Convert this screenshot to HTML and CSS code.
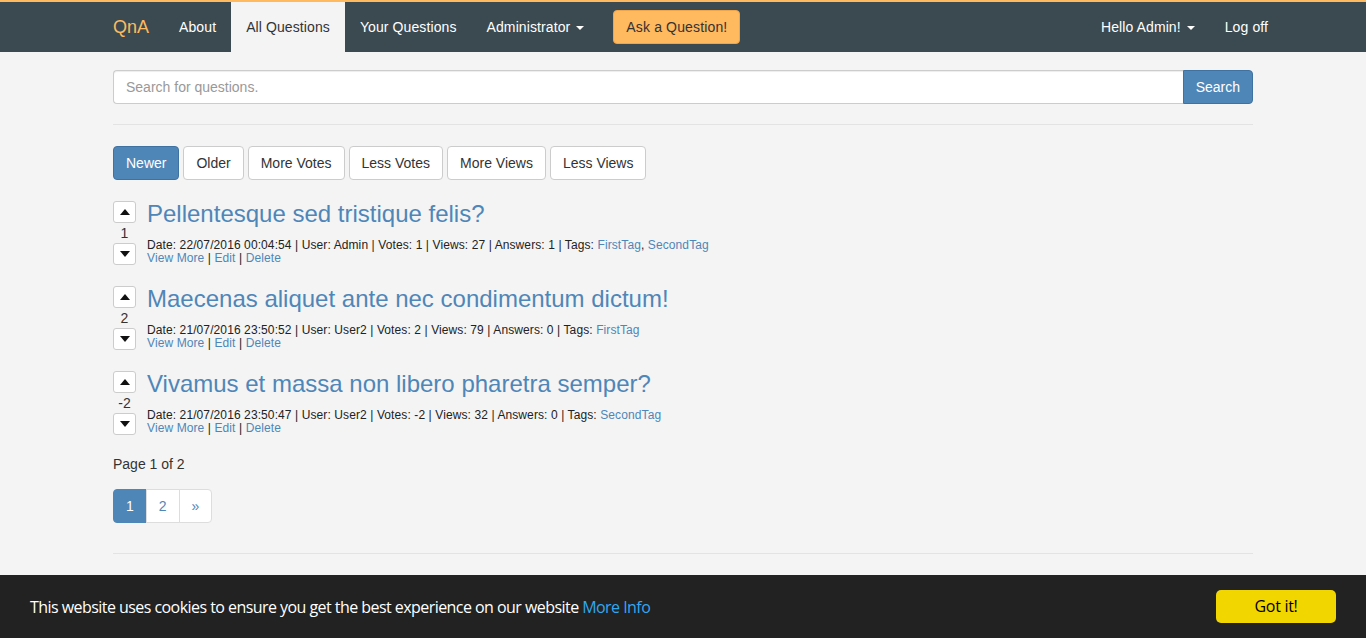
FILE: index.html
```html
<!DOCTYPE html>
<html lang="en">
<head>
<meta charset="utf-8">
<title>All Questions - QnA</title>
<link rel="stylesheet" href="styles.css">
</head>
<body>
<nav class="navbar">
  <div class="container nav-inner">
    <div class="nav-left">
      <a class="brand" href="#">QnA</a>
      <a class="nav-link" href="#">About</a>
      <a class="nav-link active" href="#">All Questions</a>
      <a class="nav-link" href="#">Your Questions</a>
      <a class="nav-link" href="#">Administrator <span class="caret"></span></a>
      <a class="ask-btn" href="#">Ask a Question!</a>
    </div>
    <div class="nav-right">
      <a class="nav-link" href="#">Hello Admin! <span class="caret"></span></a>
      <a class="nav-link" href="#">Log off</a>
    </div>
  </div>
</nav>

<main class="container">
  <form class="search">
    <input class="search-input" type="text" placeholder="Search for questions.">
    <button class="search-btn" type="button">Search</button>
  </form>
  <hr class="rule rule-top">

  <div class="sorts">
    <a class="btn btn-primary" href="#">Newer</a>
    <a class="btn" href="#">Older</a>
    <a class="btn" href="#">More Votes</a>
    <a class="btn" href="#">Less Votes</a>
    <a class="btn" href="#">More Views</a>
    <a class="btn" href="#">Less Views</a>
  </div>

  <div class="questions">
    <div class="question">
      <div class="votes">
        <button class="vote" type="button"><span class="tri up"></span></button>
        <div class="count">1</div>
        <button class="vote" type="button"><span class="tri down"></span></button>
      </div>
      <div class="q-body">
        <a class="q-title" href="#">Pellentesque sed tristique felis?</a>
        <div class="meta">Date: 22/07/2016 00:04:54 | User: Admin | Votes: 1 | Views: 27 | Answers: 1 | Tags: <a href="#">FirstTag</a>, <a href="#">SecondTag</a></div>
        <div class="meta"><a href="#">View More</a> | <a href="#">Edit</a> | <a href="#">Delete</a></div>
      </div>
    </div>

    <div class="question">
      <div class="votes">
        <button class="vote" type="button"><span class="tri up"></span></button>
        <div class="count">2</div>
        <button class="vote" type="button"><span class="tri down"></span></button>
      </div>
      <div class="q-body">
        <a class="q-title" href="#">Maecenas aliquet ante nec condimentum dictum!</a>
        <div class="meta">Date: 21/07/2016 23:50:52 | User: User2 | Votes: 2 | Views: 79 | Answers: 0 | Tags: <a href="#">FirstTag</a></div>
        <div class="meta"><a href="#">View More</a> | <a href="#">Edit</a> | <a href="#">Delete</a></div>
      </div>
    </div>

    <div class="question">
      <div class="votes">
        <button class="vote" type="button"><span class="tri up"></span></button>
        <div class="count">-2</div>
        <button class="vote" type="button"><span class="tri down"></span></button>
      </div>
      <div class="q-body">
        <a class="q-title" href="#">Vivamus et massa non libero pharetra semper?</a>
        <div class="meta">Date: 21/07/2016 23:50:47 | User: User2 | Votes: -2 | Views: 32 | Answers: 0 | Tags: <a href="#">SecondTag</a></div>
        <div class="meta"><a href="#">View More</a> | <a href="#">Edit</a> | <a href="#">Delete</a></div>
      </div>
    </div>
  </div>

  <p class="page-info">Page 1 of 2</p>
  <ul class="pagination">
    <li class="active"><a href="#">1</a></li>
    <li><a href="#">2</a></li>
    <li><a href="#">&raquo;</a></li>
  </ul>
  <hr class="rule rule-bottom">
</main>

<div class="cookie">
  <span class="cookie-text">This website uses cookies to ensure you get the best experience on our website <a href="#">More Info</a></span>
  <a class="cookie-btn" href="#">Got it!</a>
</div>
</body>
</html>
```

FILE: styles.css
```css
* { box-sizing: border-box; }

html, body {
  margin: 0;
  padding: 0;
}

body {
  background: #f4f4f4;
  color: #333;
  font-family: "Liberation Sans", Arial, sans-serif;
  font-size: 14px;
  line-height: 20px;
}

a { text-decoration: none; color: #4f86b8; }

.container {
  width: 1170px;
  margin: 0 auto;
  padding: 0 15px;
}

/* Navbar */
.navbar {
  background: #3b4a50;
  border-top: 2px solid #ffb95f;
  height: 52px;
}

.nav-inner {
  display: flex;
  justify-content: space-between;
  height: 50px;
}

.nav-left, .nav-right {
  display: flex;
  align-items: stretch;
}

.nav-left { margin-left: -15px; }
.nav-right { margin-right: -30px; }

.brand {
  color: #ffb95f;
  font-size: 18px;
  line-height: 20px;
  padding: 15px;
}

.nav-link {
  color: #fff;
  padding: 15px;
  line-height: 20px;
  letter-spacing: 0.1px;
}

.nav-link.active {
  background: #f4f4f4;
  color: #333;
}

.caret {
  display: inline-block;
  width: 0;
  height: 0;
  margin-left: 2px;
  vertical-align: middle;
  border-top: 4px solid;
  border-right: 4px solid transparent;
  border-left: 4px solid transparent;
}

.ask-btn {
  align-self: flex-start;
  margin: 8px 0 0 14px;
  background: #ffb95f;
  border: 1px solid #f0a54a;
  border-radius: 4px;
  color: #333;
  padding: 6px 12px;
  line-height: 20px;
  letter-spacing: 0.15px;
}

/* Search */
.search {
  display: flex;
  margin-top: 18px;
}

.search-input {
  flex: 1;
  height: 34px;
  padding: 6px 12px;
  font: 14px "Liberation Sans", Arial, sans-serif;
  color: #555;
  background: #fff;
  border: 1px solid #ccc;
  border-right: 0;
  border-radius: 4px 0 0 4px;
  box-shadow: inset 0 1px 1px rgba(0,0,0,.075);
}

.search-input::placeholder { color: #999; }

.search-btn {
  height: 34px;
  padding: 6px 12px;
  font: 14px "Liberation Sans", Arial, sans-serif;
  color: #fff;
  background: #4f86b8;
  border: 1px solid #3f72a0;
  border-radius: 0 4px 4px 0;
}

.rule {
  border: 0;
  border-top: 1px solid #e3e3e3;
  margin: 20px 0;
}

.rule-top { margin-bottom: 21px; }

/* Sort buttons */
.sorts {
  display: flex;
  gap: 4px;
  margin-bottom: 20px;
}

.btn {
  display: inline-block;
  padding: 6px 12px;
  line-height: 20px;
  color: #333;
  background: #fff;
  border: 1px solid #ccc;
  border-radius: 4px;
}

.btn-primary {
  color: #fff;
  background: #4f86b8;
  border-color: #3f72a0;
}

/* Questions */
.questions {
  display: flex;
  flex-direction: column;
  gap: 20px;
}

.question {
  display: flex;
}

.votes {
  width: 23px;
  display: flex;
  flex-direction: column;
  align-items: center;
  padding-top: 1px;
}

.vote {
  width: 23px;
  height: 22px;
  padding: 0;
  background: #fff;
  border: 1px solid #ccc;
  border-radius: 3px;
  display: flex;
  align-items: center;
  justify-content: center;
}

.tri {
  width: 0;
  height: 0;
  border-left: 5px solid transparent;
  border-right: 5px solid transparent;
}

.tri.up { border-bottom: 6px solid #111; }
.tri.down { border-top: 6px solid #111; }

.count {
  font-size: 14px;
  line-height: 20px;
  color: #333;
}

.q-body {
  margin-left: 11px;
  padding-top: 1px;
  display: flex;
  flex-direction: column;
}

.q-title {
  font-size: 24px;
  line-height: 26px;
  margin-bottom: 12px;
  color: #4f86b8;
}

.meta {
  font-size: 12px;
  line-height: 13px;
  color: #222;
  letter-spacing: 0.1px;
}

/* Pagination */
.page-info {
  margin: 19px 0 0;
  line-height: 20px;
}

.pagination {
  display: flex;
  list-style: none;
  padding: 0;
  margin: 15px 0 0;
}

.pagination li a {
  display: block;
  padding: 6px 12px;
  line-height: 20px;
  color: #4f86b8;
  background: #fff;
  border: 1px solid #ddd;
  margin-left: -1px;
}

.pagination li:first-child a {
  margin-left: 0;
  border-radius: 4px 0 0 4px;
}

.pagination li:last-child a { border-radius: 0 4px 4px 0; }

.pagination li.active a {
  background: #4f86b8;
  border-color: #4f86b8;
  color: #fff;
}

.rule-bottom { margin: 30px 0 0; }

/* Cookie bar */
.cookie {
  position: fixed;
  left: 0;
  right: 0;
  bottom: 0;
  height: 63px;
  background: #222;
  color: #fff;
  display: flex;
  align-items: center;
  justify-content: space-between;
  padding: 0 30px;
  font-family: "Open Sans", "Noto Sans", sans-serif;
  font-size: 16px;
}

.cookie-text { letter-spacing: -0.55px; }

.cookie-text a { color: #31a8f0; }

.cookie-btn {
  width: 120px;
  height: 33px;
  line-height: 33px;
  text-align: center;
  background: #f1d600;
  color: #000;
  border-radius: 5px;
  font-size: 16px;
  letter-spacing: -0.3px;
}
```
